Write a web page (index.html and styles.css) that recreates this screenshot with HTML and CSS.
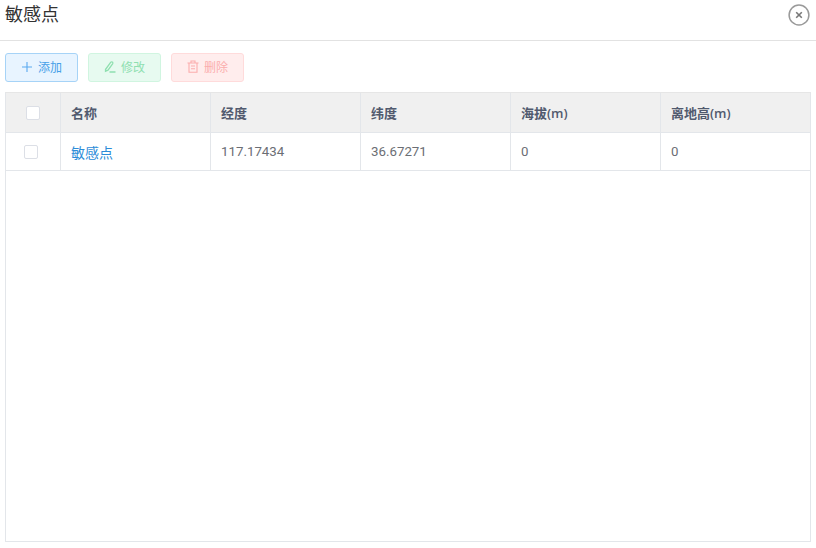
FILE: index.html
```html
<!DOCTYPE html>
<html lang="zh-CN">
<head>
<meta charset="utf-8">
<title>敏感点</title>
<link rel="stylesheet" href="styles.css">
</head>
<body>
<header class="head">
  <h1 class="title">敏感点</h1>
  <button class="close" aria-label="关闭">
    <svg width="22" height="22" viewBox="0 0 22 22"><circle cx="11" cy="11" r="9.9" fill="none" stroke="#9a9a9a" stroke-width="1.5"/><path d="M8.200 8.200l5.600 5.600M13.800 8.200l-5.600 5.600" stroke="#777" stroke-width="1.600" fill="none"/></svg>
  </button>
</header>
<div class="toolbar">
  <button class="btn add">
    <svg width="12" height="12" viewBox="0 0 12 12"><path d="M6 1v10M1 6h10" stroke="#5aa9f0" stroke-width="1.100" fill="none"/></svg>
    <span>添加</span>
  </button>
  <button class="btn edit">
    <svg width="12" height="13" viewBox="0 0 12 13"><path d="M1.500 9.500 6.800 2.200c.6-.7 1.400-.4 1.800 0 .4.500.4 1 0 1.600L4 10.200 1.500 11.200zM5.500 12h6" stroke="#8fe0b0" stroke-width="1.300" fill="none"/></svg>
    <span>修改</span>
  </button>
  <button class="btn del">
    <svg width="12" height="13" viewBox="0 0 12 13"><path d="M.5 3h11M4 3V1h4v2M2 3v9.200h8V3M4 6h4M4 8.800h4" stroke="#fbadad" stroke-width="1.100" fill="none"/></svg>
    <span>删除</span>
  </button>
</div>
<section class="table">
  <div class="row header">
    <div class="cell check"><i class="box head-box"></i></div>
    <div class="cell">名称</div>
    <div class="cell">经度</div>
    <div class="cell">纬度</div>
    <div class="cell">海拔(m)</div>
    <div class="cell">离地高(m)</div>
  </div>
  <div class="row body">
    <div class="cell check"><i class="box body-box"></i></div>
    <div class="cell link">敏感点</div>
    <div class="cell num">117.17434</div>
    <div class="cell num">36.67271</div>
    <div class="cell num">0</div>
    <div class="cell num">0</div>
  </div>
</section>
</body>
</html>
```
FILE: styles.css
```css
* { box-sizing: border-box; }
html, body { margin: 0; height: 100%; }
body {
  width: 816px;
  height: 548px;
  overflow: hidden;
  background: #fff;
  font-family: "Open Sans", "Noto Sans CJK SC", sans-serif;
  font-size: 13px;
  color: #606266;
}
.head {
  height: 41px;
  border-bottom: 1px solid #e2e2e2;
  padding: 0 6px 0 5px;
  display: flex;
  justify-content: space-between;
  align-items: flex-start;
}
.title {
  margin: 0;
  font-size: 18px;
  font-weight: 400;
  line-height: 29px;
  color: #333;
}
.close {
  border: 0;
  background: none;
  padding: 0;
  margin-top: 4px;
  width: 22px;
  height: 22px;
  display: block;
}
.toolbar {
  display: flex;
  gap: 10px;
  padding: 12px 5px 10px;
}
.btn {
  width: 73px;
  height: 29px;
  border: 1px solid;
  border-radius: 3px;
  padding: 0 0 2px;
  display: flex;
  align-items: center;
  justify-content: center;
  gap: 5px;
  font: inherit;
  font-size: 12px;
}
.add { background: #e8f4ff; border-color: #a6d3f7; color: #46a0e8; }
.edit { background: #e7faf0; border-color: #d0f5e0; color: #8fe0b0; }
.del { background: #ffeded; border-color: #ffdbdb; color: #fbadad; }
.table {
  margin: 0 5px;
  width: 806px;
  height: 450px;
  border: 1px solid #e3e6ea;
  border-top-color: #e6e6e6;
}
.row {
  display: grid;
  grid-template-columns: 55px 150px 150px 150px 150px 149px;
  border-bottom: 1px solid #e3e6ea;
}
.header { height: 40px; background: #f0f0f0; font-weight: 600; color: #515a6e; }
.body { height: 38px; }
.cell {
  padding-left: 10px;
  border-right: 1px solid #e3e6ea;
  display: flex;
  align-items: center;
}
.cell:last-child { border-right: 0; }
.check { padding-left: 0; }
.box {
  display: block;
  width: 14px;
  height: 14px;
  background: #fff;
  border: 1px solid #dcdfe6;
  border-radius: 2px;
}
.head-box { margin-left: 20px; }
.body-box { margin-left: 18px; }
.link { color: #2d8cd8; font-size: 14px; padding-top: 1px; }
.num { font-family: Roboto, sans-serif; font-size: 13.300px; color: #6b6e74; }
```
